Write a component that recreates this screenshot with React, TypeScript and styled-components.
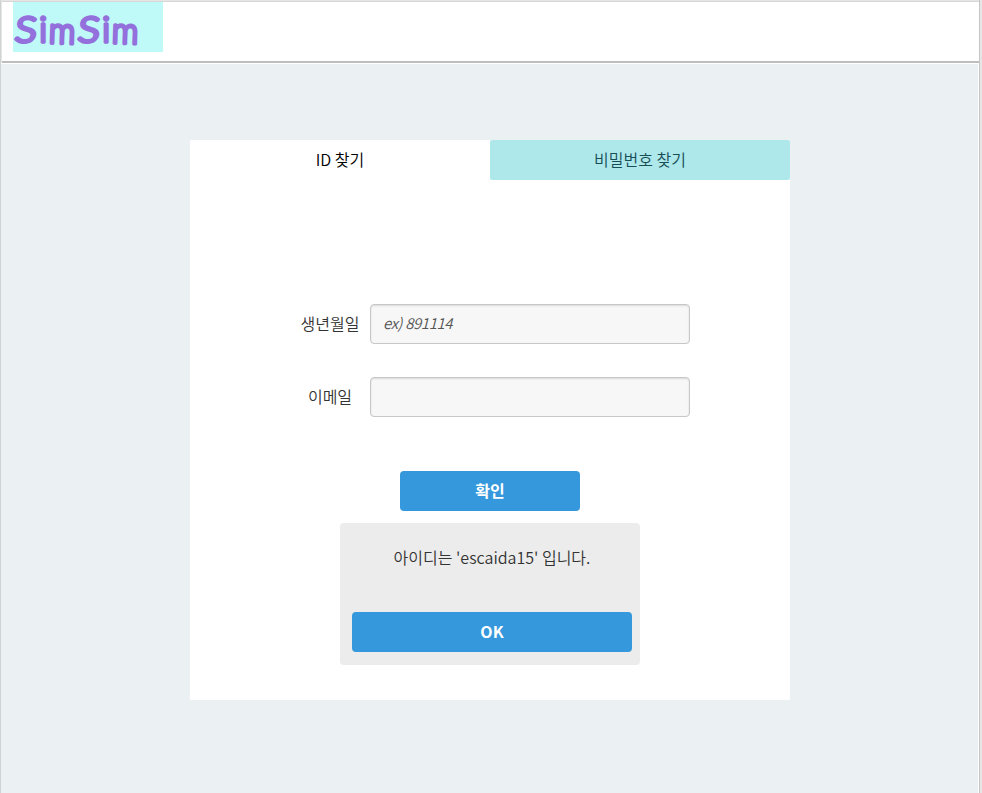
import React from "react";
import styled, { createGlobalStyle } from "styled-components";

const GlobalStyle = createGlobalStyle`
  *, *::before, *::after { box-sizing: border-box; }
  body {
    margin: 0;
    background: #e6e6e6;
    color: #333;
    font-family: "Noto Sans CJK KR", sans-serif;
    font-weight: 350;
    font-size: 16px;
  }
`;

const Page = styled.div`
  width: 980px;
  height: 793px;
  padding-top: 1px;
  border-right: 1px solid #c6c6c6;
  border-left: 1px solid #cfd2d3;
  overflow: hidden;
`;

const Header = styled.header`
  height: 62px;
  margin-left: 1px;
  padding-left: 11px;
  background: #fff;
  border-top: 1px solid #d6d6d6;
  border-bottom: 2px solid #bdbdbd;
`;

const Logo = styled.h1`
  width: 150px;
  height: 50px;
  margin: 0;
  background: #bff9f8;
  svg { display: block; }
  text {
    fill: #9370db;
    stroke: #9370db;
    stroke-width: 3.4px;
    stroke-linejoin: round;
    font: 300 35px Lato, sans-serif;
  }
`;

const Main = styled.main`
  height: 730px;
  padding-top: 76px;
  background: #ebf1f3;
  border-top: 1px solid #fff;
  border-right: 1px solid #fff;
`;

const Card = styled.section`
  width: 600px;
  height: 560px;
  margin-left: 189px;
  background: #fff;
  border-radius: 3px 2px 0 0;
`;

const Tabs = styled.nav`
  display: grid;
  grid-template-columns: 1fr 1fr;
  height: 40px;
`;

const Tab = styled.button<{ $active?: boolean }>`
  padding: 0 0 2px;
  border: 0;
  border-radius: 2px;
  background: ${({ $active }) => ($active ? "#fff" : "#aee8eb")};
  color: ${({ $active }) => ($active ? "#000" : "#174d55")};
  font: inherit;
  line-height: 38px;
`;

const Form = styled.form`
  display: flex;
  flex-direction: column;
  align-items: center;
  padding-top: 124px;
`;

const Field = styled.label`
  display: grid;
  grid-template-columns: 80px 320px;
  align-items: center;
  width: 400px;
  height: 40px;
  margin-bottom: 33px;
`;

const FieldName = styled.span`
  padding-bottom: 2px;
  text-align: center;
`;

const Input = styled.input`
  width: 320px;
  height: 40px;
  padding: 0 12px 5px;
  border: 1px solid #c7c7c7;
  border-radius: 4px;
  outline: 0;
  background: #f7f7f7;
  box-shadow: inset 0 1px 2px rgba(0, 0, 0, 0.12);
  color: #555;
  font: inherit;
  &::placeholder {
    color: #555;
    font-style: italic;
    font-size: 15px;
    letter-spacing: -0.4px;
    opacity: 1;
  }
`;

const Button = styled.button<{ $width: number }>`
  width: ${({ $width }) => $width}px;
  height: 40px;
  padding: 0 0 1px;
  border: 0;
  border-radius: 4px;
  background: #3598dc;
  color: #fff;
  font: 700 16px/39px "Noto Sans CJK KR", sans-serif;
`;

const Submit = styled(Button)`
  margin-top: 21px;
`;

const Result = styled.div`
  display: flex;
  flex-direction: column;
  align-items: flex-start;
  justify-content: space-between;
  width: 300px;
  height: 142px;
  margin-top: 12px;
  padding: 22px 8px 13px 12px;
  border-radius: 4px;
  background: #ececec;
`;

const Message = styled.p`
  width: 280px;
  margin: 0;
  line-height: 24px;
  text-align: center;
`;

const WordmarkHalf = ({ x }: { x: number }) => (
  <g transform={`translate(${x} 0)`}>
    <text transform="translate(.9 39.5) skewX(-6) scale(1.16 1)">S</text>
    <text transform="translate(26.3 40)">i</text>
    <text transform="translate(35.6 41) rotate(2) scale(.94 1.04)">m</text>
  </g>
);

export default function App() {
  return (
    <>
      <GlobalStyle />
      <Page>
        <Header>
          <Logo>
            <svg width="150" height="50" role="img" aria-label="SimSim">
              <WordmarkHalf x={0} />
              <WordmarkHalf x={63} />
            </svg>
          </Logo>
        </Header>
        <Main>
          <Card>
            <Tabs>
              <Tab type="button" $active>ID 찾기</Tab>
              <Tab type="button">비밀번호 찾기</Tab>
            </Tabs>
            <Form onSubmit={(e) => e.preventDefault()}>
              <Field>
                <FieldName>생년월일</FieldName>
                <Input placeholder="ex) 891114" />
              </Field>
              <Field>
                <FieldName>이메일</FieldName>
                <Input type="email" />
              </Field>
              <Submit type="submit" $width={180}>확인</Submit>
              <Result>
                <Message>아이디는 'escaida15' 입니다.</Message>
                <Button type="button" $width={280}>OK</Button>
              </Result>
            </Form>
          </Card>
        </Main>
      </Page>
    </>
  );
}
